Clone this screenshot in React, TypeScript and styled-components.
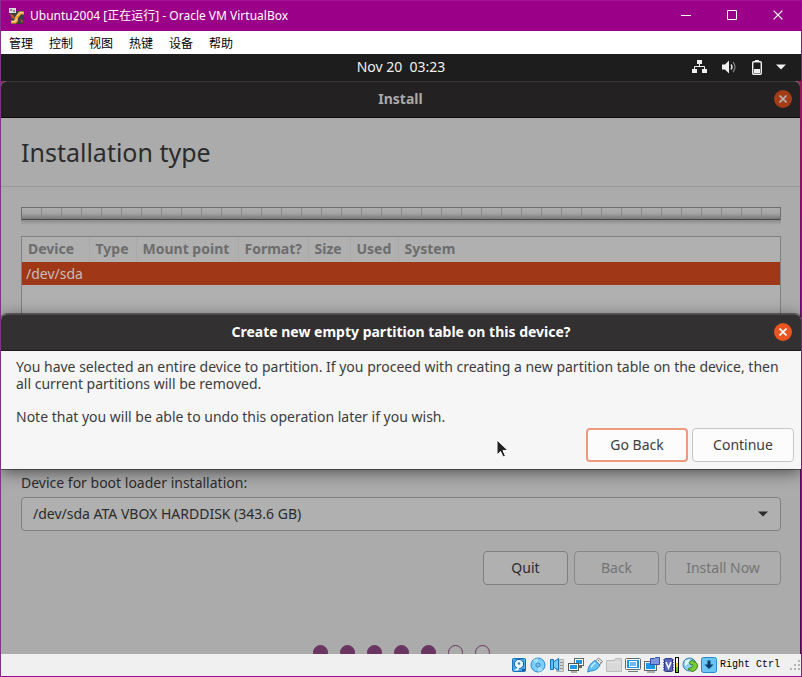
import React from "react";
import styled, { createGlobalStyle } from "styled-components";

const GlobalStyle = createGlobalStyle`
  * { box-sizing: border-box; }
  body { margin: 0; font-family: "Noto Sans", "Noto Sans CJK SC", sans-serif; }
  button, select { font-family: inherit; }
`;

const Window = styled.div`
  display: flex;
  flex-direction: column;
  height: 100vh;
  border: 1px solid #9c0a93;
  border-left-color: #85308a;
  border-top-width: 0;
  background: #efefef;
`;

const TitleBar = styled.header`
  display: flex;
  align-items: center;
  flex: none;
  height: 31px;
  padding-left: 7px;
  gap: 5px;
  background: #9b0089;
  border-top: 1px solid #a51498;
  color: #fff;
  font: 12px/16px "Noto Sans", "Noto Sans CJK SC", sans-serif;
`;

const WindowTitle = styled.h1`
  flex: 1;
  margin: 0;
  font: inherit;
  white-space: nowrap;
`;

const CaptionRow = styled.div`
  display: flex;
`;

const CaptionButton = styled.button`
  display: flex;
  align-items: center;
  justify-content: center;
  width: 46px;
  height: 30px;
  padding: 0 0 2px;
  border: 0;
  background: none;
  color: #fff;
`;

const MenuBar = styled.nav`
  display: flex;
  flex: none;
  height: 23px;
  padding-left: 8px;
  gap: 16px;
  background: #fff;
`;

const MenuItem = styled.button`
  padding: 0;
  border: 0;
  background: none;
  color: #000;
  font: 12px/22px "Noto Sans CJK SC", sans-serif;
`;

const Guest = styled.main`
  position: relative;
  flex: 1;
  min-height: 0;
  overflow: hidden;
  background: linear-gradient(#8d1f50, #6a0f63 40%, #4a0a46);
`;

const TopBar = styled.div`
  display: grid;
  grid-template-columns: 1fr auto 1fr;
  align-items: center;
  height: 27px;
  padding: 0 15px 1px;
  background: #1d1d1d;
  color: #f0f0f0;
  font-size: 14px;
  line-height: 26px;
`;

const Clock = styled.time`
  grid-column: 2;
  white-space: pre;
`;

const Tray = styled.div`
  display: flex;
  align-items: center;
  justify-content: flex-end;
  gap: 14px;
`;

const Installer = styled.section`
  margin-right: 1px;
  background: #ababab;
  color: #2b2b2b;
  font-size: 14px;
  border-radius: 5px 5px 0 0;
`;

const Header = styled.div<{ $active?: boolean }>`
  display: grid;
  grid-template-columns: 1fr auto 1fr;
  align-items: center;
  height: 37px;
  padding: 0 ${(p) => (p.$active ? 9 : 8)}px 1px;
  border-radius: 6px 6px 0 0;
  border-top: 1px solid ${(p) => (p.$active ? "#4b4949" : "#373535")};
  border-bottom: 1px solid ${(p) => (p.$active ? "#1c1b1b" : "#0f0e0e")};
  background: ${(p) => (p.$active ? "#323030" : "#232121")};
  color: ${(p) => (p.$active ? "#fff" : "#aba9a8")};
`;

const HeaderTitle = styled.h2`
  grid-column: 2;
  margin: 0;
  font-size: 14px;
  line-height: 20px;
  font-weight: 700;
`;

const CloseButton = styled.button<{ $active?: boolean }>`
  display: flex;
  align-items: center;
  justify-content: center;
  justify-self: end;
  width: 18px;
  height: 18px;
  padding: 0;
  border: 0;
  border-radius: 50%;
  background: ${(p) => (p.$active ? "#e95420" : "#a33c17")};
  color: ${(p) => (p.$active ? "#fff" : "#b8b0ac")};
`;

const PageTitle = styled.h3`
  margin: 0;
  padding: 0 20px;
  border-bottom: 1px solid #999;
  font-size: 25px;
  line-height: 68px;
  font-weight: 400;
  white-space: nowrap;
`;

const Page = styled.div`
  display: flex;
  flex-direction: column;
  padding: 20px 19px 0 20px;
`;

const PartitionBar = styled.div`
  height: 29px;
  background:
    linear-gradient(#6e6e6e, #6e6e6e) 0 0 / 100% 1px no-repeat,
    linear-gradient(#6e6e6e, #6e6e6e) 0 0 / 1px 13px no-repeat,
    linear-gradient(#6e6e6e, #6e6e6e) 100% 0 / 1px 13px no-repeat,
    linear-gradient(#474747, #474747) 0 12px / 100% 1px no-repeat,
    linear-gradient(#8b8b8b, #ababab) 0 13px / 100% 5px no-repeat,
    repeating-linear-gradient(90deg, #8a8a8a 0 1px, transparent 1px 20px) 0 0 / 100% 14px no-repeat,
    linear-gradient(#b0b0b0, #a4a4a4 50%, #707070) 0 0 / 100% 13px no-repeat;
`;

const DeviceBox = styled.div`
  height: 233px;
  border: 1px solid #808080;
  background: #b0b0b0;
`;

const DeviceTable = styled.table`
  width: 100%;
  table-layout: fixed;
  border-collapse: collapse;
  line-height: 20px;
`;

const Col = styled.col<{ $w?: number }>`
  width: ${(p) => (p.$w ? `${p.$w}px` : "auto")};
`;

const HeadCell = styled.th`
  height: 25px;
  padding: 0 0 2px 6px;
  border-right: 1px solid #aaa;
  color: #6d6d6d;
  font-weight: 700;
  font-size: 14px;
  text-align: left;
  white-space: nowrap;
  &:last-child { border-right: 0; }
`;

const DeviceCell = styled.td`
  height: 23px;
  padding: 0 0 0 4px;
  background: #a03817;
  color: #c9bdb8;
`;

const FieldLabel = styled.label`
  height: 28px;
  line-height: 28px;
`;

const SelectWrap = styled.div`
  display: grid;
  align-items: center;
`;

const BootSelect = styled.select`
  grid-area: 1 / 1;
  height: 34px;
  padding: 0 32px 1px 11px;
  border: 1px solid #808080;
  border-radius: 4px;
  background: #b0b0b0;
  color: #2b2b2b;
  font-size: 14px;
  appearance: none;
`;

const SelectArrow = styled.span`
  grid-area: 1 / 1;
  justify-self: end;
  display: flex;
  margin-right: 13px;
  pointer-events: none;
`;

const Actions = styled.div`
  display: flex;
  justify-content: flex-end;
  gap: 6px;
  margin-top: 20px;
`;

const PageButton = styled.button<{ $wide?: boolean }>`
  width: ${(p) => (p.$wide ? 116 : 85)}px;
  height: 34px;
  padding: 0 0 2px;
  border: 1px solid #808080;
  border-radius: 4px;
  background: #b0b0b0;
  color: #2b2b2b;
  font-size: 14px;
  &:disabled { background: #adadad; color: #747474; border-color: #878787; }
`;

const Steps = styled.div`
  display: flex;
  justify-content: center;
  gap: 12px;
  margin-top: 60px;
`;

const Step = styled.span<{ $done: boolean }>`
  width: 15px;
  height: 15px;
  border: 1px solid #6a3560;
  border-radius: 50%;
  background: ${(p) => (p.$done ? "#6a3560" : "transparent")};
`;

const Dialog = styled.section`
  position: absolute;
  top: 260px;
  left: 0;
  right: 0;
  border-radius: 6px 6px 0 0;
  background: #f6f6f6;
  box-shadow: 0 0 0 1px rgba(0, 0, 0, 0.4), 0 3px 16px rgba(0, 0, 0, 0.55);
  color: #3c3c3c;
`;

const DialogBody = styled.div`
  display: flex;
  flex-direction: column;
  padding: 7px 7px 7px 15px;
`;

const Message = styled.p`
  margin: 0 0 16px;
  font-size: 14px;
  line-height: 17px;
  white-space: nowrap;
  &:last-of-type { margin-bottom: 3px; }
`;

const DialogActions = styled.div`
  display: flex;
  justify-content: flex-end;
  gap: 4px;
`;

const DialogButton = styled.button<{ $focus?: boolean }>`
  width: 102px;
  height: 34px;
  padding: 0 0 2px;
  border: ${(p) => (p.$focus ? "2px solid #ec9a80" : "1px solid #c6c6c6")};
  border-radius: 4px;
  background: #fcfcfc;
  color: #3c3c3c;
  font-size: 14px;
`;

const Pointer = styled.svg`
  position: absolute;
  left: 495px;
  top: 125px;
`;

const StatusBar = styled.footer`
  display: flex;
  align-items: center;
  justify-content: flex-end;
  flex: none;
  height: 22px;
  gap: 3px;
  background: #f0f0f0;
`;

const HostKey = styled.span`
  margin-right: 6px;
  color: #000;
  font: 10px/16px "Liberation Mono", monospace;
`;

const Cross = ({ size = 8, width = 1.6 }: { size?: number; width?: number }) => (
  <svg width={size} height={size} viewBox="0 0 8 8" stroke="currentColor" strokeWidth={width}>
    <path d="M.5.5l7 7M7.5.5l-7 7" />
  </svg>
);

const Caret = () => (
  <svg width="10" height="6" viewBox="0 0 10 6" fill="currentColor">
    <path d="M0 .5h10L5 5.5z" />
  </svg>
);

const AppIcon = () => (
  <svg width="17" height="17" viewBox="0 0 17 17">
    <path d="M2 3h14v13H3z" fill="#38404a" />
    <path d="M7 9l4-5.500h5v3h-3l-3 3.500v3l-2 2.500H3v-3h3z" fill="#f0a23c" />
    <path d="M9 8l3-3.500h3M4 13.500h3l2-3" stroke="#ffdf9a" fill="none" />
    <path d="M2 6l2 4 3 1-2-4zM12 11l3 2-1 2z" fill="#cf5b26" />
    <path d="M1 0h7v5H1z" fill="#dcdcdc" />
    <path d="M2 1h2v2H2zM5 2h2v2H5z" fill="#8d8d8d" />
  </svg>
);

const S = ({ children }: { children: React.ReactNode }) => (
  <svg width="16" height="16" viewBox="0 0 16 16">{children}</svg>
);

const StatusIcons = () => (
  <>
    <S>
      <rect x="1.5" y="1.5" width="13" height="13" rx="1" fill="#49a9e8" stroke="#1672bd" />
      <circle cx="8" cy="7" r="4.6" fill="#e9f6ff" stroke="#0f5fa5" />
      <circle cx="8" cy="6.5" r="1.3" fill="#2a8bd6" />
      <path d="M3 13.500l4-3 1.500 1.500-2 1.500z" fill="#fff" />
      <path d="M11 12h3v2h-3z" fill="#0f5fa5" />
    </S>
    <S>
      <circle cx="8" cy="8" r="7" fill="#7ccdf8" stroke="#2989cf" />
      <path d="M8 8L3 3a7 7 0 0 1 5-1.500zM8 8l5 5a7 7 0 0 1-5 1.500z" fill="#a8e0fc" />
      <circle cx="8" cy="8" r="2" fill="#d8f2ff" stroke="#1b79c0" />
      <circle cx="8" cy="8" r=".8" fill="#1b79c0" />
    </S>
    <S>
      <path d="M10 2.500h4.500v12h-7V12H10z" fill="#d4d4d4" stroke="#b0b0b0" />
      <path d="M11 5.500h3M11 8.500h3M11 11.500h3" stroke="#909090" />
      <path d="M1.500 2.500h3v10h-3z" fill="#5bbcf3" stroke="#1571ba" />
      <path d="M4.500 5l5-3.500v12L4.500 10z" fill="#74cdf9" stroke="#1571ba" />
    </S>
    <S>
      <rect x="6.500" y="1.500" width="9" height="7" fill="#1898e8" stroke="#666" />
      <rect x="7.500" y="2.500" width="7" height="5" fill="none" stroke="#fff" />
      <path d="M11 9h3v2h-3z" fill="#666" />
      <rect x=".5" y="6.500" width="10" height="7" fill="#1898e8" stroke="#555" />
      <rect x="1.500" y="7.500" width="8" height="5" fill="none" stroke="#fff" />
      <path d="M3 15h6" stroke="#666" />
    </S>
    <S>
      <path d="M8.500 4l3-3L15.500 4.500 12.500 8z" fill="#f2f2f2" stroke="#777" />
      <path d="M11 3l.8.8M12.700 4.700l.8.800" stroke="#444" />
      <path d="M.8 15c.2-5 2.500-8.500 7-11.500L13 8c-2 4-6 6-9.500 6z" fill="#62c2f5" stroke="#2284c9" />
      <path d="M4 10.500c1-2 2.500-3.500 4.500-5" stroke="#c6edff" strokeWidth="1.500" fill="none" />
    </S>
    <S>
      <path d="M.5 3.500h8l1-2h6v13H.5z" fill="#d8d8d8" stroke="#bbb" />
      <path d="M1 5.500h14" stroke="#e4e4e4" />
    </S>
    <S>
      <rect x=".5" y="1.500" width="15" height="11" rx="1" fill="#fff" stroke="#666" />
      <rect x="2" y="3" width="12" height="8" fill="#1898e8" />
      <rect x="4.500" y="4.500" width="7" height="5" fill="#67c1f4" stroke="#fff" />
      <path d="M3 14.500h10" stroke="#777" />
    </S>
    <S>
      <rect x=".5" y="4.500" width="12" height="9" fill="#1898e8" stroke="#666" />
      <rect x="1.500" y="5.500" width="10" height="7" fill="none" stroke="#e4f5ff" />
      <path d="M6.500 1.500h4l1-1h4v7h-9z" fill="#7b95e4" stroke="#3b4da5" />
      <path d="M3 15h8" stroke="#666" />
    </S>
    <S>
      <path d="M0 3h11M0 5.500h11M0 8h11M0 10.500h11M0 13h11" stroke="#4a4f96" />
      <rect x="1.500" y="1.500" width="8" height="13" rx="1" fill="#5a66bb" stroke="#343b85" />
      <path d="M3 5l2.500 6L8 5" stroke="#fff" strokeWidth="1.500" fill="none" />
      <rect x="12.500" y=".5" width="3" height="15" fill="#fff" stroke="#000" />
      <path d="M13 6h2v4h-2z" fill="#f0d542" />
      <path d="M13 10h2v5h-2z" fill="#68c42e" />
    </S>
    <S>
      <circle cx="7.5" cy="7.5" r="6.5" fill="#8fcdef" stroke="#3a80ac" />
      <path d="M3 4l5-2-1 4-4 3z" fill="#e1f5ff" />
      <path d="M7 5.500L10.500 3l1 1.500c2 0 4 2 4 4.500s-2 5-5.500 5.500l-4-2.500 3-1.500c1.500 0 2.500-1.500 1.500-3L9 8z" fill="#7acb35" stroke="#348320" />
    </S>
    <S>
      <rect x=".5" y=".5" width="15" height="15" rx="2" fill="#6bc6f5" stroke="#2989cf" />
      <path d="M6.500 3.500h3v4h3L8 12 3.500 7.500h3z" fill="#0b3c6b" />
    </S>
  </>
);

const columns: [string, number | undefined][] = [
  ["Device", 67], ["Type", 47], ["Mount point", 102], ["Format?", 70],
  ["Size", 42], ["Used", 48], ["System", undefined],
];

export default function App() {
  return (
    <>
      <GlobalStyle />
      <Window>
        <TitleBar>
          <AppIcon />
          <WindowTitle>Ubuntu2004 [正在运行] - Oracle VM VirtualBox</WindowTitle>
          <CaptionRow>
            <CaptionButton aria-label="Minimize">
              <svg width="10" height="10" viewBox="0 0 10 10"><path d="M0 5.500h10" stroke="#fff" /></svg>
            </CaptionButton>
            <CaptionButton aria-label="Maximize">
              <svg width="10" height="10" viewBox="0 0 10 10"><path d="M.5.500h9v9h-9z" stroke="#fff" fill="none" /></svg>
            </CaptionButton>
            <CaptionButton aria-label="Close"><Cross size={10} width={1} /></CaptionButton>
          </CaptionRow>
        </TitleBar>
        <MenuBar>
          {["管理", "控制", "视图", "热键", "设备", "帮助"].map((m) => (
            <MenuItem key={m}>{m}</MenuItem>
          ))}
        </MenuBar>
        <Guest>
          <TopBar>
            <Clock>Nov 20  03:23</Clock>
            <Tray>
              <svg width="16" height="14" viewBox="0 0 16 14" fill="#f0f0f0">
                <path d="M5 0h5v4H5zM0 9h5v4H0zM10 9h5v4h-5z" />
                <path d="M7.500 3v3.500M2.500 9V6.500h10V9" stroke="#f0f0f0" fill="none" />
              </svg>
              <svg width="16" height="14" viewBox="0 0 16 14" fill="none">
                <path d="M0 4.500h3L7 .5v13l-4-4H0z" fill="#f0f0f0" />
                <path d="M9 4.500q2 2.500 0 5" stroke="#d8d8d8" strokeWidth="1.500" />
                <path d="M11 2q4 5 0 10" stroke="#777" strokeWidth="1.300" />
              </svg>
              <svg width="10" height="15" viewBox="0 0 10 15">
                <path d="M3 0h4v2H3z" fill="#f0f0f0" />
                <rect x=".7" y="1.700" width="8.600" height="12.600" rx="1" fill="none" stroke="#f0f0f0" strokeWidth="1.400" />
                <path d="M2 9h6v4H2z" fill="#f0f0f0" />
              </svg>
              <Caret />
            </Tray>
          </TopBar>
          <Installer>
            <Header>
              <HeaderTitle>Install</HeaderTitle>
              <CloseButton aria-label="Close installer"><Cross /></CloseButton>
            </Header>
            <PageTitle>Installation type</PageTitle>
            <Page>
              <PartitionBar />
              <DeviceBox>
                <DeviceTable>
                  <colgroup>{columns.map(([n, w]) => <Col key={n} $w={w} />)}</colgroup>
                  <thead>
                    <tr>{columns.map(([n]) => <HeadCell key={n}>{n}</HeadCell>)}</tr>
                  </thead>
                  <tbody>
                    <tr><DeviceCell colSpan={7}>/dev/sda</DeviceCell></tr>
                  </tbody>
                </DeviceTable>
              </DeviceBox>
              <FieldLabel htmlFor="boot">Device for boot loader installation:</FieldLabel>
              <SelectWrap>
                <BootSelect id="boot">
                  <option>/dev/sda ATA VBOX HARDDISK (343.6 GB)</option>
                </BootSelect>
                <SelectArrow><Caret /></SelectArrow>
              </SelectWrap>
              <Actions>
                <PageButton>Quit</PageButton>
                <PageButton disabled>Back</PageButton>
                <PageButton $wide disabled>Install Now</PageButton>
              </Actions>
              <Steps>
                {[1, 2, 3, 4, 5, 6, 7].map((n) => <Step key={n} $done={n <= 5} />)}
              </Steps>
            </Page>
          </Installer>
          <Dialog role="dialog" aria-labelledby="dialog-title">
            <Header $active>
              <HeaderTitle id="dialog-title">Create new empty partition table on this device?</HeaderTitle>
              <CloseButton $active aria-label="Close dialog"><Cross /></CloseButton>
            </Header>
            <DialogBody>
              <Message>
                You have selected an entire device to partition. If you proceed with creating a new partition table on the device, then
                <br />
                all current partitions will be removed.
              </Message>
              <Message>Note that you will be able to undo this operation later if you wish.</Message>
              <DialogActions>
                <DialogButton $focus>Go Back</DialogButton>
                <DialogButton>Continue</DialogButton>
              </DialogActions>
            </DialogBody>
            <Pointer width="13" height="20" viewBox="0 0 13 20">
              <path d="M1 1v15l3.500-3.500L7 18l2.500-1-2.500-5.500H12z" fill="#222" stroke="#fff" />
            </Pointer>
          </Dialog>
        </Guest>
        <StatusBar>
          <StatusIcons />
          <HostKey>Right Ctrl</HostKey>
          <svg width="12" height="12" viewBox="0 0 12 12" fill="#b4b4b4">
            <path d="M9 1h2v2H9zM5 5h2v2H5zM9 5h2v2H9zM1 9h2v2H1zM5 9h2v2H5zM9 9h2v2H9z" />
          </svg>
        </StatusBar>
      </Window>
    </>
  );
}
